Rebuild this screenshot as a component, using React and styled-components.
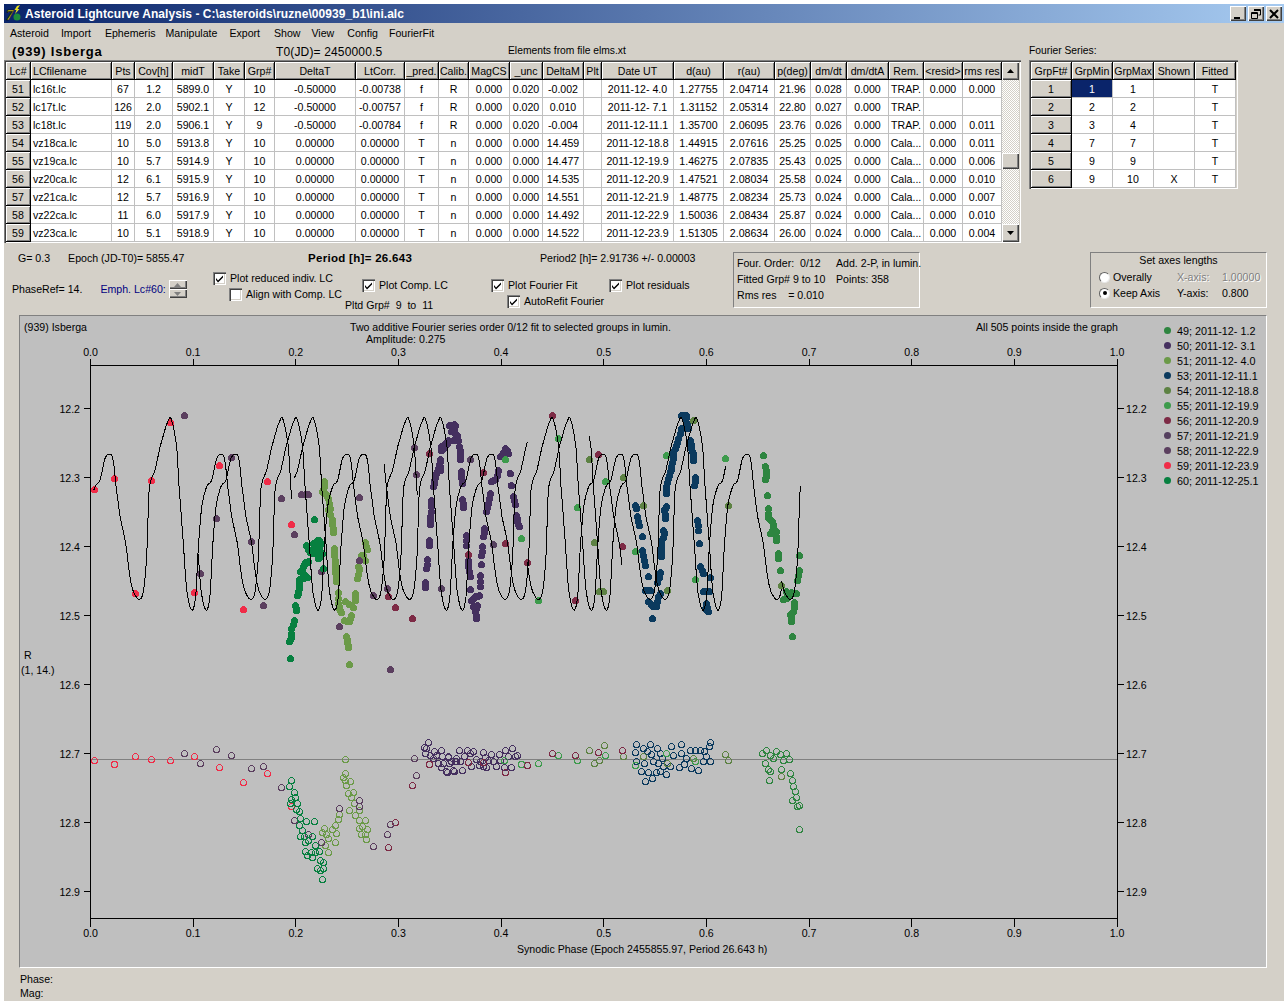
import React from 'react';
import styled, { createGlobalStyle } from 'styled-components';

const FACE = '#d4d0c8';
const LC_COLUMNS = '25px 81px 23px 38px 41px 31px 30px 81px 49px 34px 30px 41px 33px 41px 18px 72px 50px 51px 36px 36px 42px 35px 39px 39px';
const FS_COLUMNS = '41px 41px 41px 41px 41px';

const GlobalStyle = createGlobalStyle`
  html, body {
    margin: 0;
    background: #fff;
  }
  body {
    font-family: "Liberation Sans", Arial, sans-serif;
    font-size: 10.6px;
    color: #000;
  }
`;

const Win = styled.div`
  box-sizing: border-box;
  width: 1280px;
  height: 997px;
  margin: 4px 4px 3px;
  background: ${FACE};
  display: flex;
  flex-direction: column;
  overflow: hidden;
`;

const TitleBar = styled.div`
  height: 19px;
  flex: none;
  display: flex;
  align-items: center;
  padding: 0 2px 0 1px;
  background: linear-gradient(90deg, #0a246a, #a6caf0);
`;

const TitleText = styled.span`
  margin-left: 3px;
  color: #fff;
  font-weight: 700;
  font-size: 12px;
  letter-spacing: 0.05px;
`;

const CaptionButtons = styled.div`
  margin-left: auto;
  display: flex;
  gap: 1px;
`;

const CaptionButton = styled.button`
  width: 16px;
  height: 15px;
  padding: 0;
  border: 0;
  background: ${FACE};
  display: flex;
  align-items: center;
  justify-content: center;
  box-shadow: inset 1px 1px #fff, inset -1px -1px #404040, inset -2px -2px #808080;
  & + & {
    margin-left: ${p => (p.$gap ? '1px' : 0)};
  }
`;

const MenuBar = styled.div`
  height: 20px;
  flex: none;
  display: flex;
  align-items: center;
`;

const MenuItem = styled.span`
  margin-left: ${p => p.$left}px;
`;

const TopArea = styled.div`
  display: flex;
  gap: 8px;
  flex: none;
`;

const Column = styled.div`
  display: flex;
  flex-direction: column;
`;

const InfoRow = styled.div`
  height: 17px;
  display: flex;
  align-items: center;
  white-space: pre;
`;

const AsteroidName = styled.span`
  margin-left: 8px;
  width: 264px;
  font-size: 13px;
  font-weight: 700;
  letter-spacing: 0.8px;
`;

const EpochLabel = styled.span`
  width: 232px;
  font-size: 12px;
  letter-spacing: 0.15px;
`;

const SmallLabel = styled.span`
  font-size: 10.3px;
  margin-top: -3px;
`;

const GridFrame = styled.div`
  box-sizing: border-box;
  display: flex;
  padding: 2px 2px 1px;
  background: #fff;
  box-shadow: inset 1px 1px #808080, inset 2px 2px #404040, inset -1px -1px #fff, inset -2px -2px ${FACE};
  height: ${p => p.$height}px;
`;

const CellGrid = styled.div`
  display: grid;
  grid-template-columns: ${p => p.$columns};
  grid-auto-rows: 18px;
  background: #fff;
`;

const Cell = styled.div`
  box-sizing: border-box;
  display: flex;
  align-items: center;
  justify-content: ${p => (p.$left ? 'flex-start' : 'center')};
  padding-left: ${p => (p.$left ? '2px' : 0)};
  white-space: pre;
  overflow: hidden;
  border-right: 1px solid #c0c0c0;
  border-bottom: 1px solid #c0c0c0;
  background: ${p => (p.$selected ? '#0a246a' : '#fff')};
  color: ${p => (p.$selected ? '#fff' : '#000')};
`;

const FixedCell = styled(Cell)`
  background: ${FACE};
  border-right: 1px solid #000;
  border-bottom: 1px solid #000;
  box-shadow: inset 1px 1px #fff, inset -1px -1px #808080;
`;

const ScrollBar = styled.div`
  width: 17px;
  display: flex;
  flex-direction: column;
`;

const ScrollTrack = styled.div`
  flex: 1;
  padding-top: 73px;
  background: repeating-conic-gradient(#fff 0 25%, ${FACE} 0 50%) 0 0 / 2px 2px;
`;

const ScrollThumb = styled.div`
  height: 16px;
  background: ${FACE};
  box-shadow: inset 1px 1px #fff, inset -1px -1px #404040, inset -2px -2px #808080;
`;

const ScrollButton = styled(ScrollThumb)`
  height: 18px;
  flex: none;
  display: flex;
  align-items: center;
  justify-content: center;
`;

const Controls = styled.div`
  display: flex;
  height: 72px;
  flex: none;
`;

const LeftColumn = styled.div`
  width: 209px;
  flex: none;
  padding-top: 8px;
`;

const GLine = styled.div`
  height: 14px;
  display: flex;
  align-items: center;
  padding-left: 14px;
  gap: 18px;
`;

const PhaseLine = styled.div`
  margin-top: 15px;
  height: 18px;
  display: flex;
  align-items: center;
  padding-left: 8px;
`;

const EmphLabel = styled.span`
  margin-left: 18px;
  color: #000080;
`;

const Spinner = styled.div`
  margin-left: 3px;
  width: 18px;
  height: 18px;
  display: flex;
  flex-direction: column;
`;

const SpinButton = styled.div`
  flex: 1;
  background: ${FACE};
  display: flex;
  align-items: center;
  justify-content: center;
  box-shadow: inset 1px 1px #fff, inset -1px -1px #404040, inset -2px -2px #808080;
`;

const MidColumn = styled.div`
  width: 520px;
  flex: none;
  padding-top: 8px;
`;

const PeriodRow = styled.div`
  height: 14px;
  display: flex;
  align-items: center;
  padding-left: 95px;
`;

const PeriodMain = styled.b`
  width: 232px;
  font-size: 11.5px;
  letter-spacing: 0.3px;
`;

const ChecksRow = styled.div`
  margin-top: 6px;
  display: grid;
  grid-template-columns: 149px 129px 118px 1fr;
`;

const CheckColumn = styled.div`
  display: flex;
  flex-direction: column;
  gap: 2px;
  padding-top: ${p => p.$top || 0}px;
`;

const CheckRow = styled.label`
  height: 14px;
  display: flex;
  align-items: center;
  gap: 4px;
  white-space: pre;
  padding-left: ${p => p.$indent || 0}px;
`;

const CheckBox = styled.span`
  box-sizing: border-box;
  width: 13px;
  height: 13px;
  background: #fff;
  display: flex;
  flex: none;
  box-shadow: inset 1px 1px #808080, inset 2px 2px #404040, inset -1px -1px #fff, inset -2px -2px ${FACE};
`;

const PltdLabel = styled.span`
  margin: 5px 0 0 -17px;
  height: 14px;
  white-space: pre;
`;

const FitBox = styled.div`
  box-sizing: border-box;
  width: 187px;
  height: 56px;
  margin-top: 9px;
  padding: 2px 0 0 3px;
  border: 1px solid;
  border-color: #808080 #fff #fff #808080;
  display: grid;
  grid-template-columns: 99px 1fr;
  grid-auto-rows: 16px;
  align-items: center;
  white-space: pre;
`;

const AxesBox = styled.div`
  box-sizing: border-box;
  width: 177px;
  height: 56px;
  margin: 9px 17px 0 auto;
  border: 1px solid;
  border-color: #808080 #fff #fff #808080;
  padding: 0 0 0 8px;
`;

const AxesTitle = styled.div`
  text-align: center;
  height: 14px;
  line-height: 14px;
  margin: 0 0 2px -8px;
`;

const AxesRow = styled.div`
  display: grid;
  grid-template-columns: 11px 67px 45px 1fr;
  height: 16px;
  align-items: center;
  gap: 0;
`;

const Radio = styled.span`
  box-sizing: border-box;
  width: 11px;
  height: 11px;
  border-radius: 50%;
  background: #fff;
  border: 1px solid;
  border-color: #606060 #e8e8e8 #e8e8e8 #606060;
  display: flex;
  align-items: center;
  justify-content: center;
  &::after {
    content: '';
    width: 4px;
    height: 4px;
    border-radius: 50%;
    background: ${p => (p.$on ? '#000' : 'transparent')};
  }
`;

const RadioLabel = styled.span`
  padding-left: 3px;
`;

const AxisValue = styled.span`
  color: ${p => (p.$disabled ? '#808080' : '#000')};
  text-shadow: ${p => (p.$disabled ? '1px 1px #fff' : 'none')};
`;

const ChartPanel = styled.div`
  box-sizing: border-box;
  flex: none;
  height: 653px;
  margin: 0 17px 0 15px;
  display: flex;
  background: #bfbfbf;
  border: 1px solid;
  border-color: #808080 #fff #fff #808080;
`;

const ChartSvg = styled.svg`
  display: block;
  width: 1140px;
  height: 651px;
  flex: none;
  font-family: "Liberation Sans", Arial, sans-serif;
  font-size: 10.6px;
`;

const Legend = styled.div`
  padding: 7px 0 0 4px;
  display: flex;
  flex-direction: column;
`;

const LegendItem = styled.div`
  height: 15px;
  display: flex;
  align-items: center;
  gap: 6px;
  white-space: pre;
  font-size: 10.8px;
`;

const LegendDot = styled.span`
  width: 7px;
  height: 7px;
  border-radius: 50%;
  background: ${p => p.$color};
`;

const Footer = styled.div`
  padding: 4px 0 0 16px;
  line-height: 14px;
`;

const LC_HEADER = ['Lc#', 'LCfilename', 'Pts', 'Cov[h]', 'midT', 'Take', 'Grp#', 'DeltaT', 'LtCorr.', '_pred.', 'Calib.', 'MagCS', '_unc', 'DeltaM', 'Plt', 'Date UT', 'd(au)', 'r(au)', 'p(deg)', 'dm/dt', 'dm/dtA', 'Rem.', '<resid>', 'rms res'];

const LC_ROWS = [
  ['51', 'lc16t.lc', '67', '1.2', '5899.0', 'Y', '10', '-0.50000', '-0.00738', 'f', 'R', '0.000', '0.020', '-0.002', '', '2011-12- 4.0', '1.27755', '2.04714', '21.96', '0.028', '0.000', 'TRAP.', '0.000', '0.000'],
  ['52', 'lc17t.lc', '126', '2.0', '5902.1', 'Y', '12', '-0.50000', '-0.00757', 'f', 'R', '0.000', '0.020', '0.010', '', '2011-12- 7.1', '1.31152', '2.05314', '22.80', '0.027', '0.000', 'TRAP.', '', ''],
  ['53', 'lc18t.lc', '119', '2.0', '5906.1', 'Y', '9', '-0.50000', '-0.00784', 'f', 'R', '0.000', '0.020', '-0.004', '', '2011-12-11.1', '1.35700', '2.06095', '23.76', '0.026', '0.000', 'TRAP.', '0.000', '0.011'],
  ['54', 'vz18ca.lc', '10', '5.0', '5913.8', 'Y', '10', '0.00000', '0.00000', 'T', 'n', '0.000', '0.000', '14.459', '', '2011-12-18.8', '1.44915', '2.07616', '25.25', '0.025', '0.000', 'Cala...', '0.000', '0.011'],
  ['55', 'vz19ca.lc', '10', '5.7', '5914.9', 'Y', '10', '0.00000', '0.00000', 'T', 'n', '0.000', '0.000', '14.477', '', '2011-12-19.9', '1.46275', '2.07835', '25.43', '0.025', '0.000', 'Cala...', '0.000', '0.006'],
  ['56', 'vz20ca.lc', '12', '6.1', '5915.9', 'Y', '10', '0.00000', '0.00000', 'T', 'n', '0.000', '0.000', '14.535', '', '2011-12-20.9', '1.47521', '2.08034', '25.58', '0.024', '0.000', 'Cala...', '0.000', '0.010'],
  ['57', 'vz21ca.lc', '12', '5.7', '5916.9', 'Y', '10', '0.00000', '0.00000', 'T', 'n', '0.000', '0.000', '14.551', '', '2011-12-21.9', '1.48775', '2.08234', '25.73', '0.024', '0.000', 'Cala...', '0.000', '0.007'],
  ['58', 'vz22ca.lc', '11', '6.0', '5917.9', 'Y', '10', '0.00000', '0.00000', 'T', 'n', '0.000', '0.000', '14.492', '', '2011-12-22.9', '1.50036', '2.08434', '25.87', '0.024', '0.000', 'Cala...', '0.000', '0.010'],
  ['59', 'vz23ca.lc', '10', '5.1', '5918.9', 'Y', '10', '0.00000', '0.00000', 'T', 'n', '0.000', '0.000', '14.522', '', '2011-12-23.9', '1.51305', '2.08634', '26.00', '0.024', '0.000', 'Cala...', '0.000', '0.004'],
];

const FS_HEADER = ['GrpFt#', 'GrpMin', 'GrpMax', 'Shown', 'Fitted'];
const FS_ROWS = [
  ['1', '1', '1', '', 'T'],
  ['2', '2', '2', '', 'T'],
  ['3', '3', '4', '', 'T'],
  ['4', '7', '7', '', 'T'],
  ['5', '9', '9', '', 'T'],
  ['6', '9', '10', 'X', 'T'],
];

const MENU = [['Asteroid', 6], ['Import', 12], ['Ephemeris', 14], ['Manipulate', 10], ['Export', 12], ['Show', 14], ['View', 11], ['Config', 13], ['FourierFit', 11]];

const COLORS = {
  49: '#2e8540', 50: '#45305f', 51: '#6b9a48', 53: '#0b3a5e', 54: '#5d8243', 55: '#3d9b4c',
  56: '#7d2a45', 57: '#55405f', 58: '#5b3f5f', 59: '#f02c48', 60: '#078040',
};

const LEGEND = [[49, '2011-12- 1.2'], [50, '2011-12- 3.1'], [51, '2011-12- 4.0'], [53, '2011-12-11.1'], [54, '2011-12-18.8'], [55, '2011-12-19.9'], [56, '2011-12-20.9'], [57, '2011-12-21.9'], [58, '2011-12-22.9'], [59, '2011-12-23.9'], [60, '2011-12-25.1']];

// points were read off 3x crops, so they are kept as crop coordinates with the crop origin
const A = [80, 390];
const B = [440, 390];
const C = [80, 730];
const D = [440, 730];

const FILLED = [
  [50, A, '1108,105 1122,103 1115,125 1135,150 1105,150 1085,170 1095,165 1081,208 1075,235 1068,250 1062,270 1060,288 1055,330 1053,348 1051,379 1050,403 1047,450 1047,465 1042,508 1040,535 1035,578 1037,592'],
  [50, B, '30,105 45,105 40,125 52,135 58,170 60,190 62,208 65,245 65,262 68,280 68,328 70,352 25,155 15,165 5,180 0,215 0,240 80,435 80,465 85,510 85,530 90,560 92,598 95,630 105,618 118,615 122,555 120,590 125,495 127,470 125,522 130,440 133,415 140,363 145,340 150,310 155,275 165,268 175,240 180,200 195,175 205,190 210,250 215,285 220,318 225,342 228,375 232,395 238,408 112,645 105,665 108,685 100,650'],
  [51, A, '733,274 733,290 727,304 739,313 745,325 751,355 745,358 757,388 757,403 760,427 763,475 763,496 766,523 766,547 769,574 775,607 775,640 778,655 785,667 796,635 820,652 826,610 826,631 814,676 808,694 793,691 799,740 802,757 805,772 808,823 832,565 838,538 835,530 850,495 856,456 862,478 856,510 844,497'],
  [53, B, '725,75 738,75 735,85 745,115 725,115 715,145 708,165 700,185 700,205 693,228 690,245 685,265 680,290 678,310 678,348 672,362 676,385 670,420 673,430 665,450 665,476 664,498 660,547 652,577 660,610 655,620 650,648 637,685 625,635 640,650 632,600 615,600 625,558 615,525 608,480 612,510 608,440 597,405 592,380 585,345 590,355 752,150 755,175 760,190 760,210 765,263 763,285 772,391 775,421 778,460 780,530 790,550 790,605 808,605 810,562 800,640 805,665 795,655'],
  [49, B, '970,195 975,230 980,250 975,268 982,315 985,355 985,382 997,395 1000,410 990,430 1010,425 1008,450 1015,490 1015,505 1020,540 1077,497 1077,540 1072,572 1068,610 1040,605 1045,620 1030,628 1062,637 1063,652 1055,672 1050,672 1055,693 1057,739'],
  [54, B, '448,208 550,262 610,346 463,457 477,604 491,604 682,601 760,92 865,346 1023,585'],
  [55, B, '355,145 412,352 244,445 295,631 495,273 680,195 587,484 766,568 856,205 195,207'],
  [56, A, '925,619 946,652 997,685 1048,190'],
  [56, B, '130,247 85,493 196,460 262,517 337,76 406,631 475,193 547,469'],
  [58, A, '313,76 408,385 361,550 454,202 514,454 550,646 604,325 665,313 685,313 643,433 725,544 779,709 838,322 838,511 880,616 922,595 931,838 1003,172 1009,253 1084,595'],
  [57, B, '92,208 160,463 5,595'],
  [59, A, '43,298 103,265 214,271 271,97 418,226 167,610 343,607 490,658 562,274 634,403'],
  [60, A, '703,388 631,805 628,754 634,742 634,715 643,691 646,646 650,661 652,616 655,604 658,586 658,568 682,562 670,550 661,544 670,529 676,517 685,514 679,466 691,487 700,490 706,475 700,460 712,450 718,450 721,463 712,478 727,490 715,505 721,496 730,535'],
];

const OPEN = [
  [50, C, '1045,37 1033,52 1040,55 1036,70 1050,75 1062,63 1070,75 1085,60 1060,85 1075,100 1085,112 1102,126 1122,124 1105,78 1115,95 1130,95 1138,60'],
  [50, D, '5,62 8,78 20,125 25,82 28,100 40,120 45,95 58,62 62,95 68,120 72,78 82,62 92,70 95,110 100,65 108,88 118,105 122,95 130,68 135,82 140,112 155,72 160,95 170,108 178,72 180,90 192,112 195,62 205,80 215,112 218,55 225,80 232,75 10,100 50,85 145,90 130,110'],
  [51, C, '796,88 796,130 790,142 796,150 811,154 799,166 820,187 805,190 814,202 823,220 838,241 808,241 826,256 838,271 856,271 847,288 862,298 838,295 856,313 844,313 859,328 766,337 745,367 736,346 733,295 727,307 739,313 745,325 757,298 766,286 769,310 775,268 778,253'],
  [53, D, '590,43 630,43 652,55 694,49 724,43 812,37 808,49 586,67 610,55 622,64 634,73 590,94 612,100 605,125 626,127 637,145 617,154 650,127 655,100 640,95 660,70 668,85 678,133 690,108 700,75 718,112 733,103 725,70 740,85 755,115 775,122 765,60 780,60 793,64 800,80 790,95 811,94 750,62 670,108 660,125'],
  [49, D, '980,61 968,70 990,75 1010,64 1020,72 1040,70 1048,88 975,100 985,118 992,124 988,151 1000,85 1030,90 1024,118 1051,130 1057,151 1060,168 1066,184 1070,203 1058,210 1078,226 1072,229 1078,298'],
  [54, D, '448,61 493,46 478,91 463,100 550,79 610,79 682,100 760,85 856,73 865,91 1024,139'],
  [55, D, '193,91 244,103 295,99 355,76 412,91 496,76 587,106 680,70 767,94'],
  [56, C, '925,352 946,277 997,166 1048,103'],
  [56, D, '85,97 130,97 196,127 262,106 337,70 406,76 475,67 547,61'],
  [58, C, '313,70 361,100 408,58 454,76 514,115 550,109 604,172 643,271 685,313 725,337 779,235 838,211 838,229 880,349 922,313 931,283 1003,85 1009,136'],
  [59, C, '43,91 103,103 167,79 214,88 271,91 343,79 418,112 490,157 562,130 634,229'],
  [60, C, '634,151 628,169 643,187 635,208 646,202 652,220 631,220 649,238 658,244 661,265 658,286 667,301 661,319 673,319 697,320 685,330 676,337 706,346 679,274 703,274 677,364 682,377 694,367 697,382 706,367 718,364 721,391 730,397 730,415 712,415 721,421 727,448'],
];

const toPixels = ([ox, oy], text) =>
  text.split(' ').map(pair => {
    const [x, y] = pair.split(',').map(Number);
    return [Math.floor(ox + x / 3) + 0.5, Math.floor(oy + y / 3) + 0.5];
  });

// the dense nights are too many points to read one by one: close neighbours get a point between them
const fillChain = pts =>
  pts.flatMap(([x, y], i) => {
    const next = pts[i + 1];
    if (!next || Math.hypot(next[0] - x, next[1] - y) > 11) return [[x, y]];
    return [[x, y], [Math.floor((x + next[0]) / 2) + 0.5, Math.floor((y + next[1]) / 2) + 0.5]];
  });

// one cycle of the second period, offset from the lower maximum / y in crop units
const CYCLE = [[0, 193], [8, 215], [16, 290], [28, 380], [45, 460], [58, 560], [68, 605], [85, 628], [98, 605], [108, 500], [115, 300], [133, 240], [148, 170], [173, 92], [183, 92], [198, 170], [205, 290], [218, 460], [228, 600], [243, 660], [255, 620], [263, 470], [273, 350], [288, 290], [303, 270], [318, 205], [335, 193]];
const CYCLE_LEN = 335;

// each night is the same cycle shifted along the phase axis: [lower max, from, to]
const NIGHTS = [[92, 41, 635], [135, 355, 1012], [185, 643, 1342], [233, 912, 1627], [285, 1342, 1938], [330, 1528, 2105], [2045, 2105, 2162]];

const cycleY = off => {
  const n = CYCLE.length;
  let i = 0;
  while (i < n - 2 && CYCLE[i + 1][0] <= off) i += 1;
  const [x1, y1] = CYCLE[i];
  const [x2, y2] = CYCLE[i + 1];
  const y0 = i > 0 ? CYCLE[i - 1][1] : CYCLE[n - 2][1];
  const y3 = i < n - 2 ? CYCLE[i + 2][1] : CYCLE[1][1];
  const t = (off - x1) / (x2 - x1);
  return 0.5 * (2 * y1 + (y2 - y0) * t + (2 * y0 - 5 * y1 + 4 * y2 - y3) * t * t + (3 * y1 - y0 - 3 * y2 + y3) * t * t * t);
};

const nightPath = ([peak, from, to]) => {
  const pts = [];
  for (let x = from; x <= to; x += 1.5) {
    const off = (((x - peak) % CYCLE_LEN) + CYCLE_LEN) % CYCLE_LEN;
    pts.push(`${(80 + x / 3).toFixed(1)},${(390 + cycleY(off) / 3).toFixed(1)}`);
  }
  return pts.join(' ');
};

const X0 = 90.5;
const X_STEP = 102.65;
const PHASES = [0, 1, 2, 3, 4, 5, 6, 7, 8, 9, 10];
const MAGS = [['12.2', 408.5], ['12.3', 477.5], ['12.4', 546.5], ['12.5', 615.5], ['12.6', 684.5], ['12.7', 753.5], ['12.8', 822.5], ['12.9', 891.5]];
const TOP_Y = 365.5;
const BOTTOM_Y = 918.5;
const RIGHT_X = X0 + X_STEP * 10;

const Curve = () => (
  <ChartSvg viewBox="20 316 1140 651">
    <g shapeRendering="crispEdges">
      <rect x={X0} y={TOP_Y} width={RIGHT_X - X0} height={BOTTOM_Y - TOP_Y} fill="none" stroke="#000" />
      {PHASES.map(i => {
        const x = X0 + i * X_STEP;
        return (
          <g key={i} stroke="#000">
            <line x1={x} x2={x} y1={TOP_Y - 7} y2={TOP_Y} />
            <line x1={x} x2={x} y1={BOTTOM_Y} y2={BOTTOM_Y + 8} />
          </g>
        );
      })}
      {MAGS.map(([m, y]) => (
        <g key={m} stroke="#000">
          <line x1={X0 - 7} x2={X0} y1={y} y2={y} />
          <line x1={RIGHT_X} x2={RIGHT_X + 7} y1={y} y2={y} />
        </g>
      ))}
      <line x1={X0} x2={RIGHT_X} y1={759.5} y2={759.5} stroke="#808080" />
      {OPEN.map(([id, origin, text]) =>
        toPixels(origin, text).map(([x, y], i) => (
          <circle key={`o${id}-${origin}-${i}`} cx={x} cy={y} r={3} fill="none" stroke={COLORS[id]} />
        ))
      )}
      {FILLED.map(([id, origin, text]) =>
        fillChain(toPixels(origin, text)).map(([x, y], i) => (
          <circle key={`f${id}-${origin}-${i}`} cx={x} cy={y} r={3.5} fill={COLORS[id]} />
        ))
      )}
      {NIGHTS.map(night => (
        <polyline key={night[0]} points={nightPath(night)} fill="none" stroke="#000" />
      ))}
    </g>
    <text x={24} y={331}>(939) Isberga</text>
    <text x={350} y={331}>Two additive Fourier series order 0/12 fit to selected groups in lumin.</text>
    <text x={366} y={343}>Amplitude: 0.275</text>
    <text x={976} y={331}>All 505 points inside the graph</text>
    {PHASES.map(i => (
      <g key={i} textAnchor="middle">
        <text x={X0 + i * X_STEP} y={356}>{(i / 10).toFixed(1)}</text>
        <text x={X0 + i * X_STEP} y={937}>{(i / 10).toFixed(1)}</text>
      </g>
    ))}
    {MAGS.map(([m, y]) => (
      <g key={m}>
        <text x={80} y={y + 4} textAnchor="end">{m}</text>
        <text x={1126} y={y + 4}>{m}</text>
      </g>
    ))}
    <text x={24} y={659}>R</text>
    <text x={21} y={674}>(1, 14.)</text>
    <text x={517} y={953}>Synodic Phase (Epoch 2455855.97, Period 26.643 h)</text>
  </ChartSvg>
);

const Check = ({ checked, indent, label }) => (
  <CheckRow $indent={indent}>
    <CheckBox>
      {checked && (
        <svg width="13" height="13" viewBox="0 0 13 13">
          <path d="M3 6 L5 8.5 L10 3.5 L10 5.5 L5 10.5 L3 8 Z" fill="#000" />
        </svg>
      )}
    </CheckBox>
    {label}
  </CheckRow>
);

const UpArrow = ({ color = '#000' }) => (
  <svg width="7" height="4" viewBox="0 0 7 4"><path d="M3.5 0 L7 4 L0 4 Z" fill={color} /></svg>
);

const DownArrow = ({ color = '#000' }) => (
  <svg width="7" height="4" viewBox="0 0 7 4"><path d="M0 0 L7 0 L3.5 4 Z" fill={color} /></svg>
);

const AppIcon = () => (
  <svg width="17" height="19" viewBox="0 0 17 19">
    <circle cx="12" cy="13" r="3.5" fill="#1e8a3c" />
    <path d="M12 2 L15 1 L12.5 5 L14.5 5 L10 10 L11.5 6 L9.5 6 Z" fill="#e8e020" />
    <text x="1" y="16" fontFamily="Liberation Serif, serif" fontWeight="700" fontStyle="italic" fontSize="15" fill="#d8d020" stroke="#000" strokeWidth="0.5">7</text>
  </svg>
);

export default function App() {
  return (
    <>
      <GlobalStyle />
      <Win>
        <TitleBar>
          <AppIcon />
          <TitleText>Asteroid Lightcurve Analysis - C:\asteroids\ruzne\00939_b1\ini.alc</TitleText>
          <CaptionButtons>
            <CaptionButton>
              <svg width="10" height="10" viewBox="0 0 10 10"><rect x="1" y="8" width="6" height="2" fill="#000" /></svg>
            </CaptionButton>
            <CaptionButton>
              <svg width="10" height="10" viewBox="0 0 10 10"><path d="M3 0.5 H9.5 V6 H7.5 M0.5 3.5 H6.5 V9.5 H0.5 Z M3 1.5 H9.5 M0.5 4.5 H6.5" fill="none" stroke="#000" /></svg>
            </CaptionButton>
            <CaptionButton $gap>
              <svg width="10" height="10" viewBox="0 0 10 10"><path d="M1 1 L9 9 M9 1 L1 9" stroke="#000" strokeWidth="2" /></svg>
            </CaptionButton>
          </CaptionButtons>
        </TitleBar>
        <MenuBar>
          {MENU.map(([name, left]) => (
            <MenuItem key={name} $left={left}>{name}</MenuItem>
          ))}
        </MenuBar>
        <TopArea>
          <Column>
            <InfoRow>
              <AsteroidName>(939) Isberga</AsteroidName>
              <EpochLabel>T0(JD)= 2450000.5</EpochLabel>
              <SmallLabel>Elements from file elms.xt</SmallLabel>
            </InfoRow>
            <GridFrame $height={183}>
              <CellGrid $columns={LC_COLUMNS}>
                {LC_HEADER.map(h => (
                  <FixedCell key={h} $left={h === 'LCfilename'}>{h}</FixedCell>
                ))}
                {LC_ROWS.map(row =>
                  row.map((value, i) =>
                    i === 0 ? (
                      <FixedCell key={LC_HEADER[i] + row[0]}>{value}</FixedCell>
                    ) : (
                      <Cell key={LC_HEADER[i] + row[0]} $left={i === 1}>{value}</Cell>
                    )
                  )
                )}
              </CellGrid>
              <ScrollBar>
                <ScrollButton><UpArrow /></ScrollButton>
                <ScrollTrack><ScrollThumb /></ScrollTrack>
                <ScrollButton><DownArrow /></ScrollButton>
              </ScrollBar>
            </GridFrame>
          </Column>
          <Column>
            <InfoRow><SmallLabel>Fourier Series:</SmallLabel></InfoRow>
            <GridFrame $height={129}>
              <CellGrid $columns={FS_COLUMNS}>
                {FS_HEADER.map(h => <FixedCell key={h}>{h}</FixedCell>)}
                {FS_ROWS.map((row, r) =>
                  row.map((value, i) =>
                    i === 0 ? (
                      <FixedCell key={`${r}-${i}`}>{value}</FixedCell>
                    ) : (
                      <Cell key={`${r}-${i}`} $selected={r === 0 && i === 1}>{value}</Cell>
                    )
                  )
                )}
              </CellGrid>
            </GridFrame>
          </Column>
        </TopArea>
        <Controls>
          <LeftColumn>
            <GLine>
              <span>G= 0.3</span>
              <span>Epoch (JD-T0)= 5855.47</span>
            </GLine>
            <PhaseLine>
              <span>PhaseRef= 14.</span>
              <EmphLabel>Emph. Lc#60:</EmphLabel>
              <Spinner>
                <SpinButton><UpArrow color="#808080" /></SpinButton>
                <SpinButton><DownArrow color="#808080" /></SpinButton>
              </Spinner>
            </PhaseLine>
          </LeftColumn>
          <MidColumn>
            <PeriodRow>
              <PeriodMain>Period [h]= 26.643</PeriodMain>
              <span>Period2 [h]= 2.91736 +/- 0.00003</span>
            </PeriodRow>
            <ChecksRow>
              <CheckColumn>
                <Check checked label="Plot reduced indiv. LC" />
                <Check indent={16} label="Align with Comp. LC" />
              </CheckColumn>
              <CheckColumn $top={7}>
                <Check checked label="Plot Comp. LC" />
                <PltdLabel>Pltd Grp#  9  to  11</PltdLabel>
              </CheckColumn>
              <CheckColumn $top={7}>
                <Check checked label="Plot Fourier Fit" />
                <Check checked indent={16} label="AutoRefit Fourier" />
              </CheckColumn>
              <CheckColumn $top={7}>
                <Check checked label="Plot residuals" />
              </CheckColumn>
            </ChecksRow>
          </MidColumn>
          <FitBox>
            <span>Four. Order:  0/12</span>
            <span>Add. 2-P, in lumin.</span>
            <span>Fitted Grp# 9 to 10</span>
            <span>Points: 358</span>
            <span>Rms res    = 0.010</span>
          </FitBox>
          <AxesBox>
            <AxesTitle>Set axes lengths</AxesTitle>
            <AxesRow>
              <Radio />
              <RadioLabel>Overally</RadioLabel>
              <AxisValue $disabled>X-axis:</AxisValue>
              <AxisValue $disabled>1.00000</AxisValue>
            </AxesRow>
            <AxesRow>
              <Radio $on />
              <RadioLabel>Keep Axis</RadioLabel>
              <AxisValue>Y-axis:</AxisValue>
              <AxisValue>0.800</AxisValue>
            </AxesRow>
          </AxesBox>
        </Controls>
        <ChartPanel>
          <Curve />
          <Legend>
            {LEGEND.map(([id, date]) => (
              <LegendItem key={id}>
                <LegendDot $color={COLORS[id]} />
                {id}; {date}
              </LegendItem>
            ))}
          </Legend>
        </ChartPanel>
        <Footer>
          Phase:
          <br />
          Mag:
        </Footer>
      </Win>
    </>
  );
}
